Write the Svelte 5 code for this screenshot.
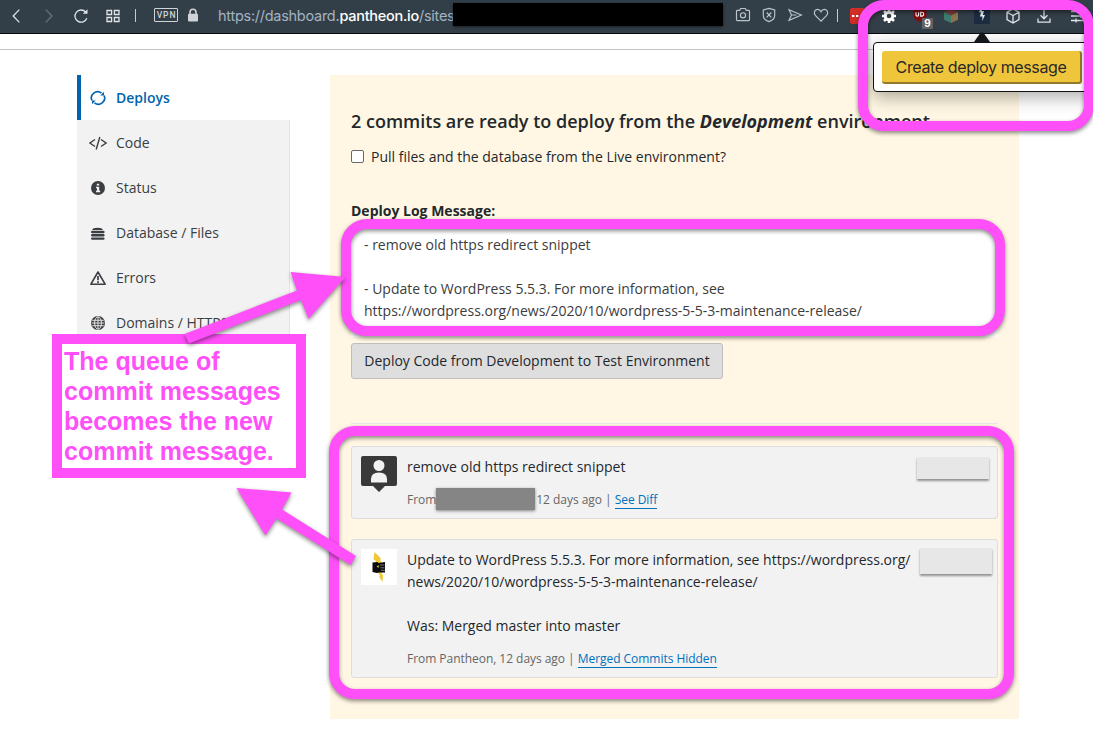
<script>
  const nav = [
    { id: 'deploys', label: 'Deploys', active: true },
    { id: 'code', label: 'Code' },
    { id: 'status', label: 'Status' },
    { id: 'database', label: 'Database / Files' },
    { id: 'errors', label: 'Errors' },
    { id: 'domains', label: 'Domains / HTTPS' }
  ];
  const log = '- remove old https redirect snippet\n\n- Update to WordPress 5.5.3. For more information, see\nhttps://wordpress.org/news/2020/10/wordpress-5-5-3-maintenance-release/';
</script>

<div class="page">
  <header class="toolbar">
    <div class="controls">
      <svg class="ic" viewBox="0 0 16 16"><path d="M11.3 1.6 5.2 8l6.1 6.4" /></svg>
      <svg class="ic dim" viewBox="0 0 16 16"><path d="M4.8 1.6 10.9 8l-6.1 6.4" /></svg>
      <svg class="ic" viewBox="0 0 16 16"><path d="M13.8 10.2A6.1 6.1 0 1 1 12.6 4" /><path d="M14.5 1.2v4.6H9.8z" fill="#dfe5ea" stroke="none" /></svg>
      <svg class="ic" viewBox="0 0 16 16"><path d="M2 2.5h4.6v4H2zM9.4 2.5H14v4H9.4zM2 9.5h4.6v4H2zM9.4 9.5H14v4H9.4z" /></svg>
      <span class="bar"></span>
    </div>
    <span class="vpn">VPN</span>
    <svg class="lock" viewBox="0 0 12 14"><path d="M3 7V4.2a3 3 0 0 1 6 0V7" fill="none" stroke="#d0d4d8" stroke-width="1.6" /><rect x="1" y="5.8" width="10" height="7.6" rx="1" fill="#d0d4d8" /></svg>
    <span class="url">https://dashboard.<b>pantheon.io</b>/sites</span>
    <span class="redacted"></span>
    <div class="actions">
      <svg class="ic soft" viewBox="0 0 16 16"><path d="M1.5 4.2q0-.8.8-.8h2.4l1-1.9h4.6l1 1.9h2.4q.8 0 .8.8v8.6q0 .8-.8.8H2.3q-.8 0-.8-.8z" /><circle cx="8" cy="8.3" r="2.6" /></svg>
      <svg class="ic soft" viewBox="0 0 16 16"><path d="M8 1.4 13.7 3v5.4q0 4-5.7 6.2-5.7-2.2-5.7-6.2V3zM5.7 5.5l4.6 4.8M10.3 5.5l-4.6 4.8" /></svg>
      <svg class="ic soft" viewBox="0 0 16 16"><path d="M2 2.7 14.4 8 2 13.3 4.5 8zM4.5 8h5" /></svg>
      <svg class="ic soft" viewBox="0 0 16 16"><path d="M8 14.2 2.5 8.6C.2 6 1.6 2.4 4.5 2.4 6.2 2.4 7.4 3.3 8 4.8c.6-1.5 1.8-2.4 3.5-2.4 2.9 0 4.3 3.6 2 6.2z" /></svg>
    </div>
    <span class="bar mid"></span>
    <div class="extensions">
      <svg class="ext" viewBox="0 0 16 16"><rect width="16" height="16" rx="2" fill="#d32d27" /><path d="M2 8h2.4M6 8h2.4M10 8h2.4" stroke="#fff" stroke-width="2.2" /></svg>
      <svg class="ext" viewBox="0 0 16 16"><g fill="none" stroke="#fff"><circle cx="8" cy="8" r="3.8" stroke-width="3" /><path d="M8 1v2.4M8 12.6V15M1 8h2.4M12.6 8H15M3 3l1.8 1.8M11.2 11.2 13 13M13 3l-1.8 1.8M4.8 11.2 3 13" stroke-width="2.6" /></g></svg>
      <span class="shield-wrap">
        <svg class="ext" viewBox="0 0 16 16"><path d="M1.500-1h13v8.500q0 4-6.500 6.500Q1.500 11.500 1.500 7.500z" fill="#800c12" /><path d="M4 4.300v2.600q0 1.200 1.300 1.200t1.300-1.200V4.300M8.700 4.300h1q2 0 2 1.900t-2 1.900h-1z" fill="none" stroke="#fff" stroke-width="1.1" /></svg>
        <span class="badge">9</span>
      </span>
      <svg class="ext" viewBox="0 0 16 16"><path d="m8 1 7 3-7 3.500L1 4z" fill="#7d3b3d" /><path d="m1 4 7 3.500V15l-7-3.200z" fill="#3d7c6c" /><path d="m15 4-7 3.500V15l7-3.200z" fill="#8b744c" /></svg>
      <svg class="ext" viewBox="0 0 16 16"><rect width="16" height="16" fill="#1b2c41" /><path d="M6.500 0 5 4.300h2L6 8.500h2.500L8.200 13 11 7H8.800L10 3H8z" fill="#e8eef4" /></svg>
      <svg class="ic" viewBox="0 0 16 16"><path d="m8 1 6 3.200v7.400L8 15l-6-3.400V4.200zM2 4.200l6 3.300 6-3.300M8 7.500V15" /></svg>
      <svg class="ic" viewBox="0 0 16 16"><path d="M8 0v10.500M4.500 7.300 8 10.800l3.500-3.500M2 10.500v3.700h12v-3.700" /></svg>
      <svg class="ic over" viewBox="0 0 16 16"><path d="M4 3.500h14M4 8h14M4 12.500h14M11 1.500v4M14 6v4M9 10.500v4" /></svg>
    </div>
  </header>
  <div class="rule"></div>

  <div class="content">
    <nav>
      {#each nav as item}
        <a class:active={item.active}>
          <svg viewBox="0 0 18 16">
            {#if item.id === 'deploys'}
              <g fill="none" stroke="currentColor" stroke-width="1.7"><path d="M2.900 10.500A6.200 6.200 0 0 1 12.500 3.200M15.100 5.500A6.200 6.200 0 0 1 5.500 12.800" /></g>
              <path d="M11.300 5.400 15 1.700v3.700zM6.700 10.600 3 14.300v-3.700z" fill="currentColor" />
            {:else if item.id === 'code'}
              <path d="M6 4.500.9 8 6 11.500M12 4.500 17.100 8 12 11.500M10.800 2 7.200 14.500" fill="none" stroke="currentColor" stroke-width="1.4" />
            {:else if item.id === 'status'}
              <circle cx="9" cy="8" r="7" fill="currentColor" /><path d="M7.800 3.700h2.400v1.900H7.800zM7 6.800h3.200v4h1v1.400H7v-1.400h1V8.200H7z" fill="#f2f2f2" />
            {:else if item.id === 'database'}
              <path d="M4.500 3.200q4-.8 8 0L14 5H3z" fill="currentColor" /><path d="M3.200 7h11.200M3.200 10.300h11.200M3.200 13.600h11.200" stroke="currentColor" stroke-width="2.400" stroke-linecap="round" />
            {:else if item.id === 'errors'}
              <path d="M9 2 16.100 14.200H1.900z" fill="none" stroke="currentColor" stroke-width="1.6" stroke-linejoin="round" /><path d="M9 6v4.300M9 11.200v1.700" stroke="currentColor" stroke-width="1.7" />
            {:else}
              <circle cx="9" cy="8" r="7" fill="currentColor" /><g fill="none" stroke="#f2f2f2" stroke-width=".9"><path d="M9 1.800v12.400M3.200 5.300h11.600M2.700 8h12.600M3.200 10.700h11.600" /><ellipse cx="9" cy="8" rx="3.4" ry="6.2" /></g>
            {/if}
          </svg>
          <span>{item.label}</span>
        </a>
      {/each}
    </nav>

    <main>
      <h1>2 commits are ready to deploy from the <em>Development</em> environment.</h1>
      <label class="pull"><span class="check"></span><span>Pull files and the database from the Live environment?</span></label>
      <div class="log-label">Deploy Log Message:</div>
      <div class="log">{log}</div>
      <button class="deploy">Deploy Code from Development to Test Environment</button>
      <section class="commits">
        <article class="first">
          <svg class="avatar" viewBox="0 0 36 36"><path d="M2 0h32q2 0 2 2v26q0 2-2 2H24l-6 6-6-6H2q-2 0-2-2V2Q0 0 2 0z" fill="#393939" /><circle cx="18" cy="9.500" r="5.500" fill="#f2f2f2" /><path d="M10 26.500V23q0-6.500 8-6.500t8 6.500v3.500z" fill="#f2f2f2" /></svg>
          <div class="body">
            <p>remove old https redirect snippet</p>
            <div class="meta"><span>From</span><span class="name"></span><span>12 days ago | <u>See Diff</u></span></div>
          </div>
          <span class="hash"></span>
        </article>
        <article class="second">
          <svg class="avatar" viewBox="0 0 36 36"><rect width="36" height="36" fill="#fff" /><path d="M13.500 3 20 9.500l-1 1.500 2.500 4H14l1-3-2.500-1.500zM15.500 22h6l-1 3 1.500 1-.5 7-3.500-5.500 1-1z" fill="#efc83a" /><path d="M11.500 13.500l5-.5 1 1 6.500-1v10.500h-6l-2 .5-4.500-1z" fill="#0b0b0b" /><path d="M19 16h4.500M19.500 18.800h4M20 21.300h4" stroke="#aaa" stroke-width=".7" /><path d="m15.500 18 2-2 .5 2.500z" fill="#efc83a" /></svg>
          <div class="body">
            <p>Update to WordPress 5.5.3. For more information, see https://wordpress.org/<br />news/2020/10/wordpress-5-5-3-maintenance-release/<br /><br />Was: Merged master into master</p>
            <div class="meta"><span>From Pantheon, 12 days ago | <u>Merged Commits Hidden</u></span></div>
          </div>
          <span class="hash tall"></span>
        </article>
      </section>
    </main>
  </div>

  <div class="popup"><svg class="pointer" viewBox="0 0 16 10"><path d="M0 10 6 1.500q2-2.500 4 0L16 10z" fill="#14181c" /></svg><button>Create deploy message</button></div>

  <div class="mark mark-popup"></div>
  <div class="mark mark-log"></div>
  <div class="mark mark-commits"></div>
  <div class="note">The queue of<br />commit messages<br />becomes the new<br />commit message.</div>
  <svg class="arrows" viewBox="0 0 1093 737">
    <path d="M184.500 334 297 290.500 290.500 272 345.500 277 308.500 319 301 300 189 343.500z" />
    <path d="M236.500 488 291.500 492.500 282 509.500 356 556 350.500 565 276.500 518.500 265.500 535.500z" />
  </svg>
</div>

<style>
  :global(body) { background: #fff; overflow: hidden; }
  * { box-sizing: border-box; }
  .page { position: relative; width: 1093px; height: 737px; overflow: hidden; background: #fff; font-family: "Open Sans", sans-serif; font-size: 14px; color: #23282d; }
  .toolbar { height: 34px; background: #333f48; border-bottom: 1px solid #06090d; display: flex; align-items: flex-start; }
  .toolbar > * { flex: none; }
  .ic { width: 16px; height: 16px; display: block; flex: none; fill: none; stroke: #dfe5ea; stroke-width: 1.3; }
  .dim { stroke: #68747e; }
  .soft { stroke: #bcc5cc; stroke-width: 1.15; }
  .over { overflow: visible; }
  .controls { display: flex; gap: 16px; padding: 8px 0 0 8px; width: 154px; }
  .controls .dim { margin-left: 1px; }
  .bar { width: 1px; height: 13px; margin: 1px 0 0 -2px; background: #c4ccd3; }
  .controls .bar { margin-left: -2px; }
  .bar.mid { margin: 9px 12px 0 8px; }
  .vpn { width: 24px; height: 14px; margin-top: 8px; border: 1px solid #d0d4d8; border-radius: 1px; color: #d0d4d8; font: 500 8.5px/12px Roboto, sans-serif; letter-spacing: .9px; text-align: center; padding-left: 1px; }
  .lock { width: 12px; height: 14px; margin: 8px 0 0 9px; }
  .url { width: 255px; margin-left: -1px; padding-left: 20px; font: 400 14.5px/31px Inter, sans-serif; color: #a3b3c1; white-space: nowrap; letter-spacing: -.27px; }
  .url b { font-weight: 500; color: #fff; }
  .redacted { width: 270px; height: 23px; margin-top: 3px; background: #000; box-shadow: 0 1px 3px #0008; position: relative; }
  .actions { display: flex; gap: 10px; padding: 7px 0 0 12px; }
  .extensions { display: flex; gap: 15px; padding-top: 8px; }
  .ext { display: block; flex: none; width: 16px; height: 16px; overflow: visible; }
  .shield-wrap { position: relative; width: 16px; }
  .badge { position: absolute; left: 10px; top: 10px; width: 11px; height: 11px; background: #606263; color: #fff; font: 700 10px/11px Inter, sans-serif; text-align: center; }
  .rule { height: 16px; border-bottom: 1px solid #c3c3c3; }
  .content { display: flex; align-items: flex-start; padding: 25px 0 0 77px; }
  nav { width: 213px; background: #f2f2f2; border-right: 1px solid #e3e3e3; }
  nav a { display: flex; align-items: center; height: 45px; padding-left: 12px; gap: 9px; color: #3b3e42; line-height: 20px; }
  nav svg { width: 18px; height: 16px; }
  nav a.active { width: 213px; background: #fff; color: #0264ae; border-left: 4px solid #0264ae; padding-left: 8px; font-weight: 600; }
  main { width: 689px; height: 644px; margin-left: 40px; padding: 34px 21px 0; background: #fff7e3; }
  h1 { margin: 0; font-size: 18px; line-height: 25px; font-weight: 600; white-space: nowrap; }
  h1 em { font-weight: 700; }
  .pull { display: flex; align-items: center; gap: 7px; height: 22px; margin-top: 11px; }
  .check { width: 13px; height: 13px; background: #fff; border: 1px solid #686868; border-radius: 2px; margin-top: 1px; }
  .log-label { margin-top: 33px; font-weight: 700; line-height: 22px; }
  .log { height: 110px; margin-top: 5px; padding: 7px 13px 0; line-height: 22px; background: #fff; color: #3c3c3c; white-space: pre; width: 647px; }
  .deploy { display: block; width: 372px; height: 36px; margin-top: 6px; padding: 0; border: 1px solid #bdbdbd; border-radius: 3px; background: #dedede; color: #23282d; font: 14px/20px "Open Sans", sans-serif; white-space: nowrap; }
  .commits { margin-top: 44px; padding-top: 22px; border-top: 1px solid #e6e6e6; }
  article { display: flex; background: #f2f2f2; border: 1px solid #dddde0; border-radius: 3px; padding: 9px 8px 0 9px; }
  .first { height: 73px; }
  .second { height: 139px; margin-top: 20px; padding-right: 5px; }
  .avatar { width: 36px; height: 36px; flex: none; }
  .body { flex: 1; margin-left: 10px; min-width: 0; white-space: nowrap; }
  .body p { margin: 0; line-height: 22px; }
  .meta { display: flex; align-items: center; height: 24px; margin-top: 9px; font-size: 12px; color: #666; letter-spacing: -.04px; }
  .name { width: 99px; height: 22px; margin-right: 1px; background: #858585; box-shadow: 0 1px 3px #0007; }
  u { color: #0071bc; text-decoration: none; border-bottom: 1px solid #0071bc; }
  .hash { flex: none; width: 72px; height: 22px; margin-top: 1px; background: #e7e7e7; box-shadow: 0 2px 2px #0006; }
  .hash.tall { height: 26px; margin-top: -1px; }
  .popup { position: absolute; left: 873px; top: 42px; width: 230px; height: 50px; padding: 8px; background: #fff; border: 1px solid #111; border-radius: 4px; box-shadow: 0 5px 18px #0005; }
  .pointer { position: absolute; left: 100px; top: -11px; width: 16px; height: 10px; }
  .popup button { display: block; width: 200px; height: 33px; padding: 1px 0 0; border: 0; border-right: 2px solid #94792a; border-bottom: 2px solid #94792a; border-radius: 3px; background: #efc53b; color: #292929; font: 16px/31px Inter, sans-serif; letter-spacing: -.38px; white-space: nowrap; }
  .mark { position: absolute; border: 10px solid #ff4ff8; border-radius: 26px; filter: drop-shadow(0 2px 2px #0007); }
  .mark-popup { left: 858px; top: 0; width: 236px; height: 131px; }
  .mark-log { left: 341px; top: 219px; width: 664px; height: 117px; }
  .mark-commits { left: 329px; top: 426px; width: 685px; height: 273px; }
  .note { position: absolute; left: 52px; top: 334px; width: 254px; height: 144px; padding: 2px 2px; border: 10px solid #ff4ff8; background: #fff; color: #ff4ff8; font: 700 25px/30px "Liberation Sans", Arial, sans-serif; white-space: nowrap; }
  .arrows { position: absolute; left: 0; top: 0; width: 1093px; height: 737px; fill: #ff4ff8; filter: drop-shadow(0 2px 2px #0007); }
</style>
